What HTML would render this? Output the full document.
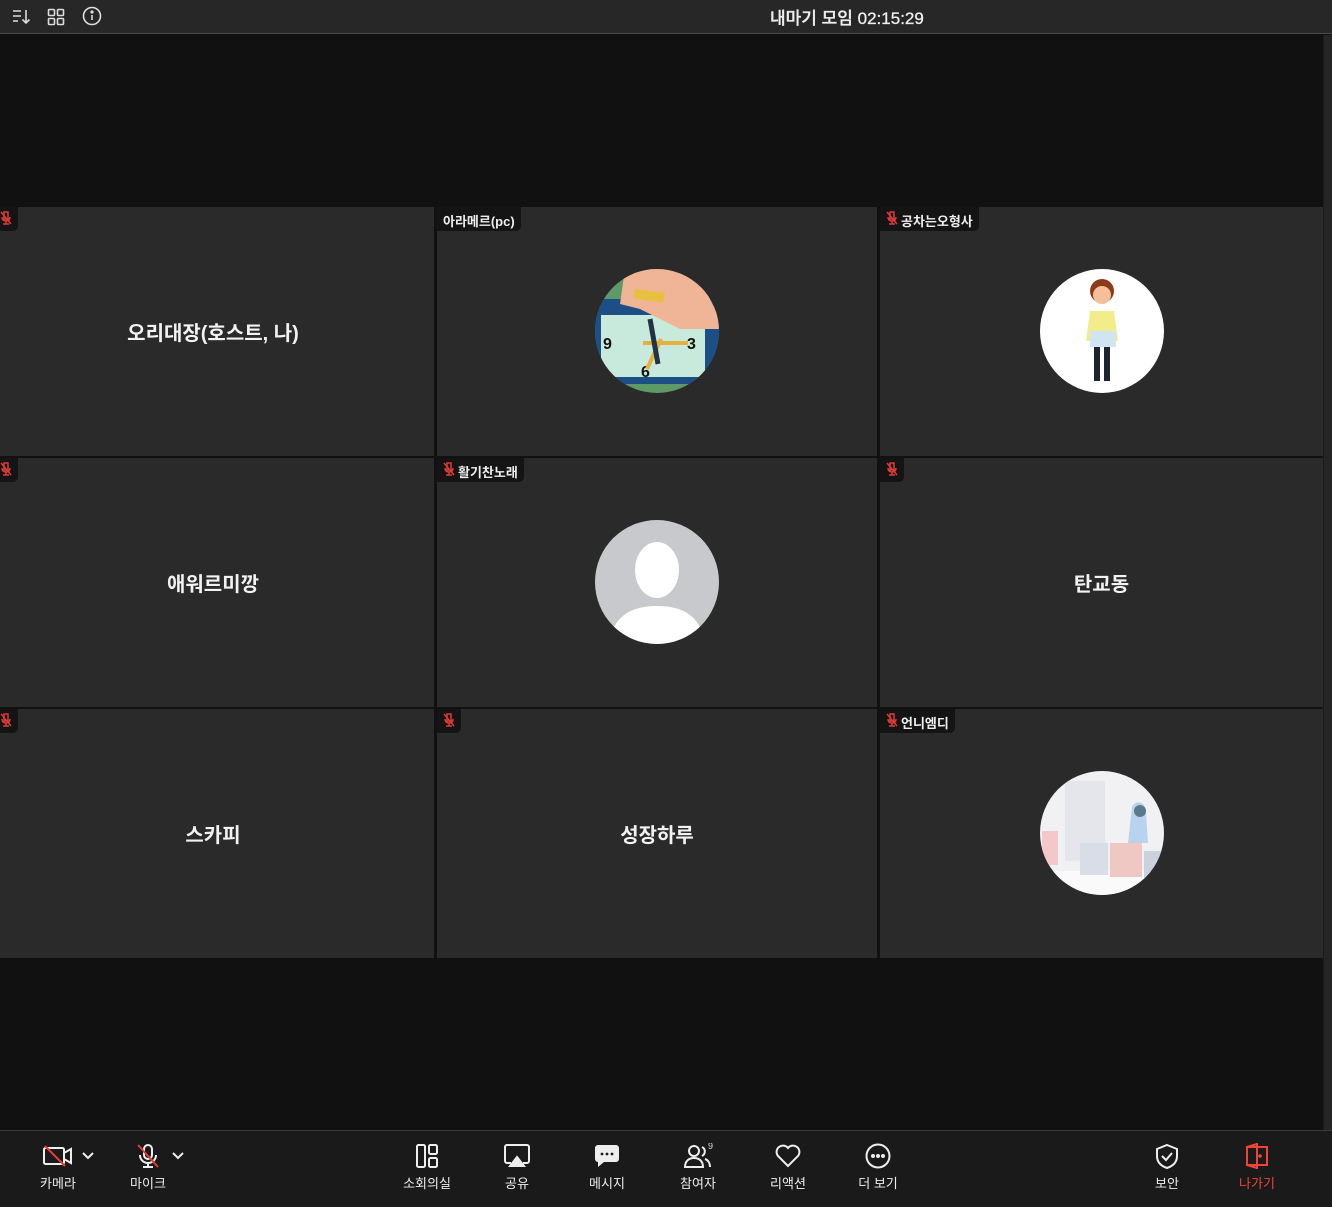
<!DOCTYPE html>
<html><head><meta charset="utf-8">
<style>
*{margin:0;padding:0;box-sizing:border-box}
body{width:1332px;height:1207px;background:#111;position:relative;overflow:hidden;font-family:"Liberation Sans","Noto Sans CJK KR",sans-serif;color:#fff}
#top{position:absolute;left:0;top:0;width:1332px;height:34px;background:#272727;border-bottom:1px solid #4a4a4a}
#title{position:absolute;left:770px;top:4px;font-size:17px;color:#eee;font-weight:500;-webkit-text-stroke:0.3px #eee}
#rs{position:absolute;left:1323px;top:35px;width:9px;height:1095px;background:#252525;border-left:1px solid #1a1a1a}
.t{position:absolute;background:#2a2a2a;overflow:hidden}
.nm{position:absolute;width:100%;top:110px;text-align:center;font-size:20px;font-weight:bold;color:#f2f2f2}
.lb{position:absolute;left:0;top:0;height:24px;background:#141414;border-radius:0 0 5px 0;font-size:13px;font-weight:bold;color:#eee;padding:4px 6px 0 6px;display:flex;align-items:flex-start;gap:3px}
.av{position:absolute;left:50%;top:62px;margin-left:-62px;width:124px;height:124px;border-radius:50%;overflow:hidden}
#bot{position:absolute;left:0;top:1130px;width:1332px;height:77px;background:#1a1a1a;border-top:1px solid #3a3a3a}
.b{position:absolute;top:12px;width:90px;text-align:center;font-size:13px;color:#eee}
.b svg{display:block;margin:0 auto 4px auto}
</style></head><body>
<div id="top">
<svg style="position:absolute;left:12px;top:8px" width="20" height="18" viewBox="0 0 20 18" fill="none" stroke="#ddd" stroke-width="1.6"><path d="M1 3h8M1 8h8M1 13h5M14 2v13M10.5 11.5 14 15l3.5-3.5"/></svg>
<svg style="position:absolute;left:47px;top:8px" width="18" height="18" viewBox="0 0 18 18" fill="none" stroke="#ddd" stroke-width="1.6"><rect x="1.5" y="1.5" width="6" height="6" rx="1"/><rect x="10.5" y="1.5" width="6" height="6" rx="1"/><rect x="1.5" y="10.5" width="6" height="6" rx="1"/><rect x="10.5" y="10.5" width="6" height="6" rx="1"/></svg>
<svg style="position:absolute;left:82px;top:6px" width="20" height="20" viewBox="0 0 20 20" fill="none" stroke="#ddd" stroke-width="1.6"><circle cx="10" cy="10" r="8.5"/><path d="M10 9v5"/><circle cx="10" cy="6" r="0.8" fill="#ddd"/></svg>
<div id="title">내마기 모임 02:15:29</div>
</div>
<div id="rs"></div>

<div class="t" style="left:0;top:207px;width:434px;height:249px"><div class="lb" style="padding-left:0"><svg width="12" height="14" viewBox="0 0 12 14"><path d="M4 1h4v7H4zM2 6c0 3 2 4 4 4s4-1 4-4M6 10v3M3 13h6" stroke="#e03a3a" fill="none" stroke-width="1.5"/><path d="M1 1l10 12" stroke="#e03a3a" stroke-width="1.5"/></svg></div><div class="nm" style="margin-left:-4px">오리대장(호스트, 나)</div></div>
<div class="t" style="left:437px;top:207px;width:440px;height:249px"><div class="lb">아라메르(pc)</div>
<div class="av" style="background:#5e9a68"><svg width="124" height="124" viewBox="0 0 124 124"><rect x="0" y="30" width="124" height="85" fill="#1b4f86"/><rect x="6" y="46" width="104" height="62" fill="#c8eadc"/><path d="M30 0h70l30 60h-45l-40-20-20-5z" fill="#f0b497"/><path d="M40 20l30 4-2 10-30-5z" fill="#e8c040"/><text x="8" y="80" font-size="16" font-weight="bold" fill="#111" font-family="Liberation Sans">9</text><text x="92" y="80" font-size="16" font-weight="bold" fill="#111" font-family="Liberation Sans">3</text><text x="46" y="108" font-size="16" font-weight="bold" fill="#111" font-family="Liberation Sans">6</text><path d="M48 74h45M52 100l14-30" stroke="#e6b040" stroke-width="4"/><path d="M55 50l8 45" stroke="#234" stroke-width="5"/></svg></div></div>
<div class="t" style="left:880px;top:207px;width:443px;height:249px"><div class="lb"><svg width="12" height="14" viewBox="0 0 12 14"><path d="M4 1h4v7H4zM2 6c0 3 2 4 4 4s4-1 4-4M6 10v3M3 13h6" stroke="#e03a3a" fill="none" stroke-width="1.5"/><path d="M1 1l10 12" stroke="#e03a3a" stroke-width="1.5"/></svg>공차는오형사</div>
<div class="av" style="background:#fff"><svg width="124" height="124" viewBox="0 0 124 124"><circle cx="62" cy="22" r="12" fill="#8b3a1a"/><circle cx="62" cy="26" r="9" fill="#f3c09a"/><path d="M50 42h24l4 30H46z" fill="#f2ec8a"/><rect x="50" y="62" width="26" height="16" fill="#cfe6f2"/><rect x="54" y="78" width="6" height="34" fill="#1d2430"/><rect x="64" y="78" width="6" height="34" fill="#1d2430"/></svg></div></div>

<div class="t" style="left:0;top:458px;width:434px;height:249px"><div class="lb" style="padding-left:0"><svg width="12" height="14" viewBox="0 0 12 14"><path d="M4 1h4v7H4zM2 6c0 3 2 4 4 4s4-1 4-4M6 10v3M3 13h6" stroke="#e03a3a" fill="none" stroke-width="1.5"/><path d="M1 1l10 12" stroke="#e03a3a" stroke-width="1.5"/></svg></div><div class="nm" style="margin-left:-4px">애워르미깡</div></div>
<div class="t" style="left:437px;top:458px;width:440px;height:249px"><div class="lb"><svg width="12" height="14" viewBox="0 0 12 14"><path d="M4 1h4v7H4zM2 6c0 3 2 4 4 4s4-1 4-4M6 10v3M3 13h6" stroke="#e03a3a" fill="none" stroke-width="1.5"/><path d="M1 1l10 12" stroke="#e03a3a" stroke-width="1.5"/></svg>활기찬노래</div>
<div class="av" style="background:#c8c9cc"><svg width="124" height="124" viewBox="0 0 124 124"><ellipse cx="62" cy="50" rx="22" ry="28" fill="#fff"/><path d="M14 124c4-28 22-38 48-38s44 10 48 38z" fill="#fff"/></svg></div></div>
<div class="t" style="left:880px;top:458px;width:443px;height:249px"><div class="lb"><svg width="12" height="14" viewBox="0 0 12 14"><path d="M4 1h4v7H4zM2 6c0 3 2 4 4 4s4-1 4-4M6 10v3M3 13h6" stroke="#e03a3a" fill="none" stroke-width="1.5"/><path d="M1 1l10 12" stroke="#e03a3a" stroke-width="1.5"/></svg></div><div class="nm">탄교동</div></div>

<div class="t" style="left:0;top:709px;width:434px;height:249px"><div class="lb" style="padding-left:0"><svg width="12" height="14" viewBox="0 0 12 14"><path d="M4 1h4v7H4zM2 6c0 3 2 4 4 4s4-1 4-4M6 10v3M3 13h6" stroke="#e03a3a" fill="none" stroke-width="1.5"/><path d="M1 1l10 12" stroke="#e03a3a" stroke-width="1.5"/></svg></div><div class="nm" style="margin-left:-4px">스카피</div></div>
<div class="t" style="left:437px;top:709px;width:440px;height:249px"><div class="lb"><svg width="12" height="14" viewBox="0 0 12 14"><path d="M4 1h4v7H4zM2 6c0 3 2 4 4 4s4-1 4-4M6 10v3M3 13h6" stroke="#e03a3a" fill="none" stroke-width="1.5"/><path d="M1 1l10 12" stroke="#e03a3a" stroke-width="1.5"/></svg></div><div class="nm">성장하루</div></div>
<div class="t" style="left:880px;top:709px;width:443px;height:249px"><div class="lb"><svg width="12" height="14" viewBox="0 0 12 14"><path d="M4 1h4v7H4zM2 6c0 3 2 4 4 4s4-1 4-4M6 10v3M3 13h6" stroke="#e03a3a" fill="none" stroke-width="1.5"/><path d="M1 1l10 12" stroke="#e03a3a" stroke-width="1.5"/></svg>언니엠디</div>
<div class="av" style="background:#f1f1f3"><svg width="124" height="124" viewBox="0 0 124 124"><rect x="25" y="10" width="40" height="80" fill="#e4e6ec"/><rect x="0" y="100" width="124" height="24" fill="#fafafa"/><rect x="40" y="72" width="28" height="32" fill="#d8dde8"/><rect x="70" y="72" width="32" height="34" fill="#efc8c4"/><rect x="104" y="80" width="20" height="28" fill="#c9d2dd"/><path d="M92 36c4-8 14-6 14 6l2 30h-20z" fill="#b9d3ee"/><circle cx="100" cy="40" r="6" fill="#5a7a8a"/><rect x="2" y="60" width="16" height="34" fill="#f2c8ca"/></svg></div></div>

<div id="bot">
<div class="b" style="left:13px"><svg width="32" height="26" viewBox="0 0 32 26" fill="none" stroke="#eee" stroke-width="2"><rect x="2" y="5" width="20" height="16" rx="1.5"/><path d="M22 10l7-4v14l-7-4"/><path d="M3 3l20 20" stroke="#e63a3a"/></svg>카메라</div>
<svg style="position:absolute;left:82px;top:21px" width="12" height="8" viewBox="0 0 12 8" fill="none" stroke="#eee" stroke-width="2"><path d="M1 1l5 5 5-5"/></svg>
<div class="b" style="left:103px"><svg width="26" height="26" viewBox="0 0 26 26" fill="none" stroke="#eee" stroke-width="2"><rect x="9" y="2" width="8" height="14" rx="4"/><path d="M5 12c0 5 4 8 8 8s8-3 8-8M13 20v4M8 24h10"/><path d="M3 2l20 22" stroke="#e63a3a"/></svg>마이크</div>
<svg style="position:absolute;left:172px;top:21px" width="12" height="8" viewBox="0 0 12 8" fill="none" stroke="#eee" stroke-width="2"><path d="M1 1l5 5 5-5"/></svg>
<div class="b" style="left:382px"><svg width="26" height="26" viewBox="0 0 26 26" fill="none" stroke="#eee" stroke-width="2"><rect x="3" y="2" width="8" height="22" rx="1.5"/><rect x="15" y="2" width="8" height="9" rx="1.5"/><rect x="15" y="15" width="8" height="9" rx="1.5"/></svg>소회의실</div>
<div class="b" style="left:472px"><svg width="28" height="26" viewBox="0 0 28 26" fill="none" stroke="#eee" stroke-width="2"><path d="M8 20H4a2 2 0 0 1-2-2V4a2 2 0 0 1 2-2h20a2 2 0 0 1 2 2v14a2 2 0 0 1-2 2h-4"/><path d="M14 14l7 9H7z" fill="#eee"/></svg>공유</div>
<div class="b" style="left:562px"><svg width="28" height="26" viewBox="0 0 28 26"><path d="M5 2h18a3 3 0 0 1 3 3v11a3 3 0 0 1-3 3H11l-6 5v-5a3 3 0 0 1-3-3V5a3 3 0 0 1 3-3z" fill="#eee"/><circle cx="9" cy="11" r="1.4" fill="#1a1a1a"/><circle cx="14" cy="11" r="1.4" fill="#1a1a1a"/><circle cx="19" cy="11" r="1.4" fill="#1a1a1a"/></svg>메시지</div>
<div class="b" style="left:653px"><svg width="32" height="26" viewBox="0 0 32 26" fill="none" stroke="#eee" stroke-width="2"><circle cx="12" cy="8" r="5"/><path d="M3 24c0-6 4-9 9-9s9 3 9 9z"/><path d="M20 4a5 5 0 0 1 0 9M23 16c3 1 5 4 5 8"/><text x="26" y="6" font-size="9" fill="#ddd" stroke="none" font-family="Liberation Sans">9</text></svg>참여자</div>
<div class="b" style="left:743px"><svg width="28" height="26" viewBox="0 0 28 26" fill="none" stroke="#eee" stroke-width="2"><path d="M14 23L4 13a6 6 0 0 1 10-8 6 6 0 0 1 10 8z"/></svg>리액션</div>
<div class="b" style="left:833px"><svg width="28" height="26" viewBox="0 0 28 26" fill="none" stroke="#eee" stroke-width="2"><circle cx="14" cy="13" r="11.5"/><circle cx="9" cy="13" r="1" fill="#eee"/><circle cx="14" cy="13" r="1" fill="#eee"/><circle cx="19" cy="13" r="1" fill="#eee"/></svg>더 보기</div>
<div class="b" style="left:1122px"><svg width="26" height="26" viewBox="0 0 26 26" fill="none" stroke="#eee" stroke-width="2"><path d="M13 2l10 4v7c0 6-4 10-10 12C7 23 3 19 3 13V6z"/><path d="M8 13l4 4 6-7"/></svg>보안</div>
<div class="b" style="left:1212px;color:#f0443a"><svg width="28" height="26" viewBox="0 0 28 26" fill="none" stroke="#f0443a" stroke-width="2"><path d="M4 4h20v18H4zM4 4l10-3v24l-10-3"/><circle cx="17" cy="13" r="0.8" fill="#f0443a"/></svg>나가기</div>
</div>
</body></html>
